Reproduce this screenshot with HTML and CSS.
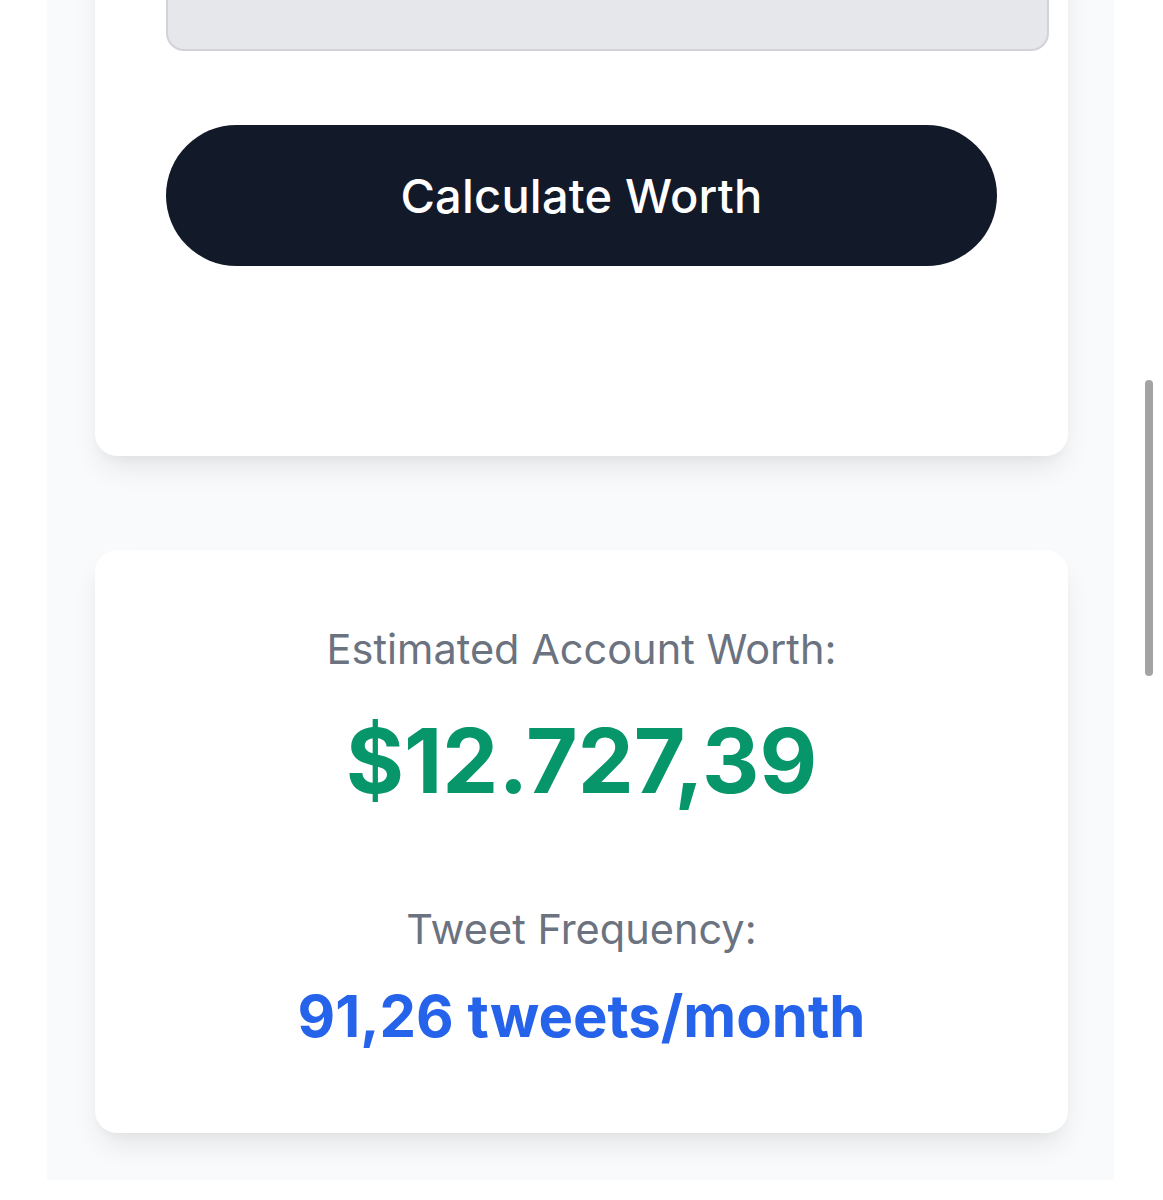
FILE: index.html
```html
<!DOCTYPE html>
<html lang="en">
<head>
<meta charset="utf-8">
<title>Account Worth</title>
<link rel="stylesheet" href="styles.css">
</head>
<body>
<div class="panel">
  <section class="card card-form">
    <div class="input-box"></div>
    <button class="btn">Calculate Worth</button>
  </section>
  <section class="card card-result">
    <p class="label">Estimated Account Worth:</p>
    <p class="worth">$12.727,39</p>
    <p class="label label-freq">Tweet Frequency:</p>
    <p class="freq">91,26 tweets/month</p>
  </section>
</div>
<div class="scrollbar"></div>
</body>
</html>
```

FILE: styles.css
```css
html, body {
  margin: 0;
  padding: 0;
  background: #ffffff;
  font-family: Inter, "Noto Sans", sans-serif;
  overflow: hidden;
  height: 1200px;
}

.panel {
  width: 1067px;
  margin-left: 47px;
  height: 1180px;
  background: #f9fafb;
  box-sizing: border-box;
  padding-left: 48px;
  padding-right: 46px;
  overflow: hidden;
}

.card {
  background: #ffffff;
  border-radius: 22px;
  box-shadow: 0 16px 30px -6px rgba(0, 0, 0, 0.09), 0 6px 12px -4px rgba(0, 0, 0, 0.04);
}

.card-form {
  margin-top: -95px;
  padding: 0 19px 190px 71px;
}

.input-box {
  height: 146px;
  box-sizing: border-box;
  background: #e6e7eb;
  border: 2px solid #d2d3da;
  border-radius: 18px;
}

.btn {
  display: block;
  margin-top: 74px;
  width: 831px;
  height: 141px;
  border: none;
  border-radius: 71px;
  background: #121a29;
  color: #ffffff;
  font-family: Inter, "Noto Sans", sans-serif;
  font-size: 47px;
  font-weight: 500;
  letter-spacing: 0.2px;
}

.card-result {
  margin-top: 94px;
  height: 583px;
  box-sizing: border-box;
  padding-top: 71px;
  text-align: center;
}

.card-result p {
  margin: 0;
}

.label {
  color: #6b7280;
  font-size: 41.5px;
  line-height: 56px;
}

.worth {
  color: #079669;
  font-size: 89px;
  font-weight: 700;
  line-height: 100px;
  margin-top: 34px !important;
}

.label-freq {
  margin-top: 90px !important;
}

.freq {
  color: #2563eb;
  font-size: 58px;
  font-weight: 700;
  line-height: 70px;
  margin-top: 24px !important;
}

.scrollbar {
  position: absolute;
  left: 1145px;
  top: 380px;
  width: 8px;
  height: 296px;
  border-radius: 4px;
  background: #a3a3a3;
}
```
